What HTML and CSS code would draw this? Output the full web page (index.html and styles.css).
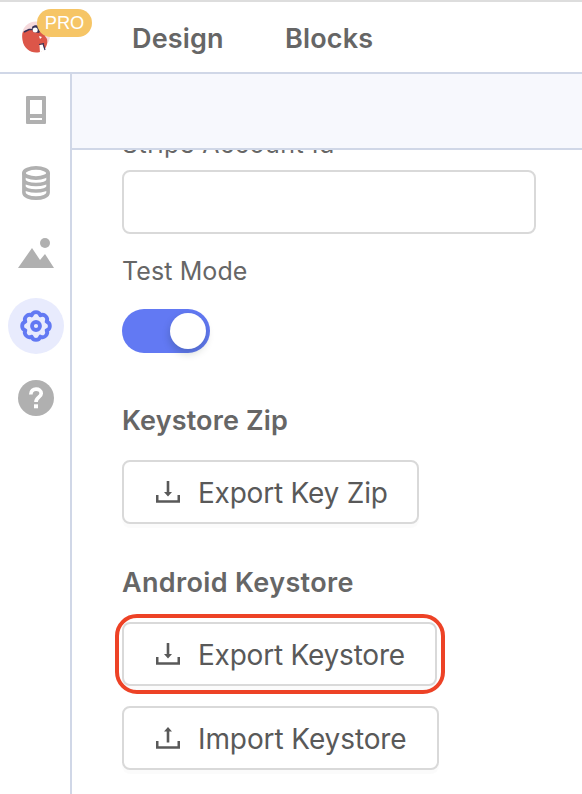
FILE: index.html
```html
<!DOCTYPE html>
<html lang="en">
<head>
<meta charset="utf-8">
<title>Settings</title>
<link rel="stylesheet" href="styles.css">
</head>
<body>
<header class="topbar">
  <a class="brand" href="#">
    <svg class="logo" width="28" height="32" viewBox="0 0 28 32">
      <circle cx="14" cy="14.500" r="14" fill="#f5d9dc"/>
      <path d="M1 11C5 8 9 9 13 7C18 5 23 8 23 15L25 18C26 23 24 28 20 30C13 34 2 30 0.500 19C0 15 0 13 1 11Z" fill="#dc5649"/>
      <path d="M2 11L7 8.500L12 8.500" fill="none" stroke="#343158" stroke-width="1.700"/>
      <path d="M10 6C13 3 18 4 19 9L17 12L11 11Z" fill="#343158"/>
      <circle cx="13.200" cy="9" r="2.500" fill="#fff"/>
      <path d="M17 15L20 16L18 18Z" fill="#fff"/>
      <path d="M17.500 24L21 23L22.500 29L18 31.500Z" fill="#fff"/>
      <path d="M17 23.500L22 22.500M21 22.500L23 29" fill="none" stroke="#343158" stroke-width="1.200"/>
    </svg>
    <span class="badge">PRO</span>
  </a>
  <nav class="tabs">
    <a class="tab design" href="#">Design</a>
    <a class="tab blocks" href="#">Blocks</a>
  </nav>
</header>
<div class="workspace">
  <aside class="sidebar">
    <a class="tool" href="#"><svg width="56" height="56" viewBox="0 0 56 56"><path fill="#b0b0b0" fill-rule="evenodd" d="M19 14H37Q38 14 38 15V41Q38 42 37 42H19Q18 42 18 41V15Q18 14 19 14ZM22 18V32H34V18ZM22 36V38H34V36Z"/></svg></a>
    <a class="tool" href="#"><svg width="56" height="56" viewBox="0 0 56 56"><g fill="none" stroke="#b0b0b0" stroke-width="3.800"><ellipse cx="28" cy="19" rx="12.100" ry="5.100"/><path d="M15.900 19V38.500C15.900 46 40.100 46 40.100 38.500V19M16 26C16 32 40 32 40 26M16 32.500C16 38.500 40 38.500 40 32.500" stroke-width="3.600"/></g></svg></a>
    <a class="tool" href="#"><svg width="56" height="56" viewBox="0 0 56 56" fill="#b0b0b0"><circle cx="37" cy="17" r="5"/><path d="M10 42L24 22L32 34L37 28L46 42Z"/></svg></a>
    <a class="tool active" href="#"><svg width="56" height="56" viewBox="0 0 56 56"><g fill="none" stroke="#6279f3" stroke-width="3.800"><path stroke-linejoin="round" d="M38.600 23.600A4.600 4.600 0 0 1 38.600 32.400A4.600 4.600 0 0 1 32.400 38.600A4.600 4.600 0 0 1 23.600 38.600A4.600 4.600 0 0 1 17.400 32.400A4.600 4.600 0 0 1 17.400 23.600A4.600 4.600 0 0 1 23.600 17.400A4.600 4.600 0 0 1 32.400 17.400A4.600 4.600 0 0 1 38.600 23.600Z"/><circle cx="28" cy="28" r="4"/></g></svg></a>
    <a class="tool" href="#"><svg width="56" height="56" viewBox="0 0 56 56"><circle cx="28" cy="28" r="18" fill="#b0b0b0"/><path d="M22.800 24.500C22.800 17.300 33.200 17.600 33.200 23.500C33.200 27.200 28 27.300 28 32" fill="none" stroke="#fff" stroke-width="3.700"/><path d="M26 34.300H30V38.300H26Z" fill="#fff"/></svg></a>
  </aside>
  <main class="main">
    <div class="subbar"></div>
    <div class="panel">
      <label class="label clipped" for="stripe">Stripe Account Id</label>
      <input class="field" id="stripe" type="text">
      <div class="label mode">Test Mode</div>
      <div class="switch"><span class="knob"></span></div>
      <h2 class="heading zip">Keystore Zip</h2>
      <button class="button key-zip"><svg class="icon" width="24" height="24" viewBox="0 0 24 24"><path d="M1.250 15V21.500H22.750V15" fill="none" stroke="#595959" stroke-width="2.500"/><path d="M10.700 1H13.300V12H16L12 16.500L8 12H10.700Z" fill="#595959"/></svg><span class="caption">Export Key Zip</span></button>
      <h2 class="heading android">Android Keystore</h2>
      <button class="button export highlighted"><svg class="icon" width="24" height="24" viewBox="0 0 24 24"><path d="M1.250 15V21.500H22.750V15" fill="none" stroke="#595959" stroke-width="2.500"/><path d="M10.700 1H13.300V12H16L12 16.500L8 12H10.700Z" fill="#595959"/></svg><span class="caption">Export Keystore</span></button>
      <button class="button import"><svg class="icon" width="24" height="24" viewBox="0 0 24 24"><path d="M1.250 15V21.500H22.750V15" fill="none" stroke="#595959" stroke-width="2.500"/><path d="M10.700 16.500H13.300V5.500H16L12 1L8 5.500H10.700Z" fill="#595959"/></svg><span class="caption">Import Keystore</span></button>
    </div>
  </main>
</div>
</body>
</html>
```
FILE: styles.css
```css
* { box-sizing: border-box; }
body {
  margin: 0;
  height: 794px;
  overflow: hidden;
  display: flex;
  flex-direction: column;
  background: #fff;
  color: #666;
  font-family: Inter, "Liberation Sans", sans-serif;
}
a { color: inherit; text-decoration: none; }
.topbar {
  height: 74px;
  flex: none;
  display: flex;
  border-top: 2px solid #ddd;
  border-bottom: 2px solid #d0d7e7;
}
.brand { position: relative; width: 132px; padding: 19px 0 0 22px; }
.logo { display: block; }
.badge {
  position: absolute;
  left: 37px;
  top: 7px;
  width: 55px;
  height: 28px;
  border-radius: 14px;
  background: #f6c566;
  color: #fff;
  font: 18.300px/28px "Liberation Sans", sans-serif;
  text-align: center;
}
.tabs { display: flex; gap: 60px; padding-top: 20px; }
.tab { font-size: 27px; font-weight: 600; line-height: 34px; letter-spacing: .15px; white-space: nowrap; }
.design { width: 93px; }
.workspace { flex: 1; display: flex; min-height: 0; }
.sidebar {
  width: 72px;
  border-right: 2px solid #d0d7e7;
  padding: 8px 0 0 8px;
  display: flex;
  flex-direction: column;
  gap: 16px;
}
.tool { width: 56px; height: 56px; border-radius: 50%; }
.tool svg { display: block; }
.active { background: #e8ebfd; }
.main { flex: 1; display: flex; flex-direction: column; min-width: 0; }
.subbar { height: 76px; flex: none; background: #f7f8fd; border-bottom: 2px solid #d0d7e7; }
.panel {
  flex: 1;
  min-height: 0;
  overflow: hidden;
  padding-left: 50px;
  display: flex;
  flex-direction: column;
  align-items: flex-start;
}
.panel > * { flex: none; }
.label { font-size: 25px; line-height: 32px; letter-spacing: .1px; white-space: nowrap; }
.clipped { margin-top: -22px; letter-spacing: .48px; }
.field {
  width: 414px;
  height: 64px;
  margin: 10px 0 0;
  border: 2px solid #d9d9d9;
  border-radius: 8px;
  background: #fff;
}
.mode { margin-top: 21px; }
.switch {
  width: 88px;
  height: 44px;
  margin-top: 22px;
  padding: 4px;
  border-radius: 22px;
  background: #6279f3;
  display: flex;
  justify-content: flex-end;
}
.knob { width: 36px; height: 36px; border-radius: 50%; background: #fff; box-shadow: 0 4px 8px rgba(0, 35, 11, .2); }
.heading { margin: 0; font-size: 27px; font-weight: 600; line-height: 34px; white-space: nowrap; }
.zip { margin-top: 51px; letter-spacing: .15px; }
.android { margin-top: 42px; letter-spacing: .35px; }
.button {
  height: 64px;
  padding: 0 0 0 32px;
  display: flex;
  align-items: center;
  gap: 18px;
  border: 2px solid #d9d9d9;
  border-radius: 8px;
  background: #fff;
  box-shadow: 0 4px 0 rgba(0, 0, 0, .016);
  color: #595959;
  font: 28px/36px Inter, "Liberation Sans", sans-serif;
  letter-spacing: -.22px;
  white-space: nowrap;
}
.caption { padding-top: 2px; }
.icon { flex: none; }
.key-zip { width: 297px; margin-top: 22px; }
.export { width: 315px; margin-top: 22px; }
.import { width: 317px; margin-top: 20px; letter-spacing: -.1px; }
.highlighted { position: relative; }
.highlighted::after {
  content: "";
  position: absolute;
  inset: -10px -10px -10px -9px;
  border: 4px solid #ed4226;
  border-radius: 22px;
}
```
